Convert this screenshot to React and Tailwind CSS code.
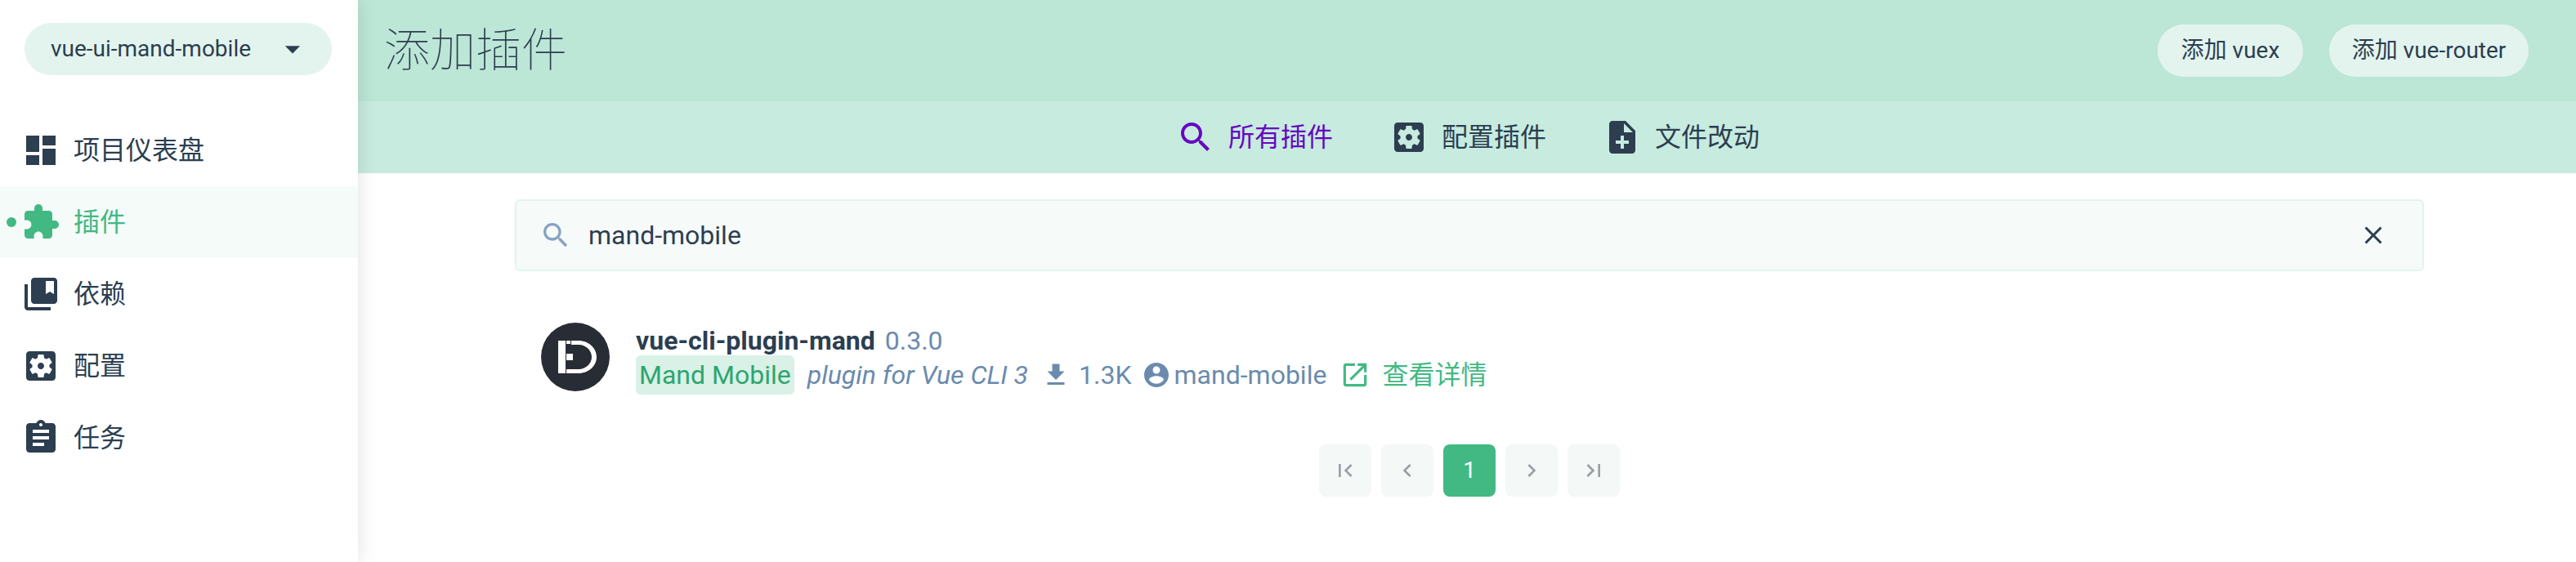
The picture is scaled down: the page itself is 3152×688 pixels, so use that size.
import React from "react";

const Icon = ({ d, className }) => (
  <svg viewBox="0 0 24 24" fill="currentColor" className={className}>
    <path d={d} />
  </svg>
);

const paths = {
  dashboard: "M3 13h8V3H3v10zm0 8h8v-6H3v6zm10 0h8V11h-8v10zm0-18v6h8V3h-8z",
  extension:
    "M20.5 11H19V7c0-1.1-.9-2-2-2h-4V3.5C13 2.12 11.88 1 10.5 1S8 2.12 8 3.5V5H4c-1.1 0-1.99.9-1.99 2v3.8H3.5c1.49 0 2.7 1.21 2.7 2.7s-1.21 2.7-2.7 2.7H2V20c0 1.1.9 2 2 2h3.8v-1.5c0-1.49 1.21-2.7 2.7-2.7 1.49 0 2.7 1.21 2.7 2.7V22H17c1.1 0 2-.9 2-2v-4h1.5c1.38 0 2.5-1.12 2.5-2.5S21.88 11 20.5 11z",
  collections:
    "M4 6H2v14c0 1.1.9 2 2 2h14v-2H4V6zm16-4H8c-1.1 0-2 .9-2 2v12c0 1.1.9 2 2 2h12c1.1 0 2-.9 2-2V4c0-1.1-.9-2-2-2zm0 10l-2.5-1.5L15 12V4h5v8z",
  settings:
    "M12 10c-1.1 0-2 .9-2 2s.9 2 2 2 2-.9 2-2-.9-2-2-2zm7-7H5c-1.11 0-2 .9-2 2v14c0 1.1.89 2 2 2h14c1.11 0 2-.9 2-2V5c0-1.1-.89-2-2-2zm-1.75 9c0 .23-.02.46-.05.68l1.48 1.16c.13.11.17.3.08.45l-1.4 2.42c-.09.15-.27.21-.43.15l-1.74-.7c-.36.28-.76.51-1.18.69l-.26 1.85c-.03.17-.18.3-.35.3h-2.8c-.17 0-.32-.13-.35-.29l-.26-1.85c-.43-.18-.82-.41-1.18-.69l-1.74.7c-.16.06-.34 0-.43-.15l-1.4-2.42c-.09-.15-.05-.34.08-.45l1.48-1.16c-.03-.23-.05-.46-.05-.69 0-.23.02-.46.05-.68l-1.48-1.16c-.13-.11-.17-.3-.08-.45l1.4-2.42c.09-.15.27-.21.43-.15l1.74.7c.36-.28.76-.51 1.18-.69l.26-1.85c.03-.17.18-.3.35-.3h2.8c.17 0 .32.13.35.29l.26 1.85c.43.18.82.41 1.18.69l1.74-.7c.16-.06.34 0 .43.15l1.4 2.42c.09.15.05.34-.08.45l-1.48 1.16c.03.23.05.46.05.69z",
  assignment:
    "M19 3h-4.18C14.4 1.84 13.3 1 12 1c-1.3 0-2.4.84-2.82 2H5c-1.1 0-2 .9-2 2v14c0 1.1.9 2 2 2h14c1.1 0 2-.9 2-2V5c0-1.1-.9-2-2-2zm-7 0c.55 0 1 .45 1 1s-.45 1-1 1-1-.45-1-1 .45-1 1-1zm2 14H7v-2h7v2zm3-4H7v-2h10v2zm0-4H7V7h10v2z",
  search:
    "M15.5 14h-.79l-.28-.27C15.41 12.59 16 11.11 16 9.5 16 5.91 13.09 3 9.5 3S3 5.91 3 9.5 5.91 16 9.5 16c1.61 0 3.09-.59 4.23-1.57l.27.28v.79l5 4.99L20.49 19l-4.99-5zm-6 0C7.01 14 5 11.99 5 9.5S7.01 5 9.5 5 14 7.01 14 9.5 11.99 14 9.5 14z",
  noteAdd:
    "M14 2H6c-1.1 0-1.99.9-1.99 2L4 20c0 1.1.89 2 1.99 2H18c1.1 0 2-.9 2-2V8l-6-6zm2 14h-3v3h-2v-3H8v-2h3v-3h2v3h3v2zm-3-7V3.5L18.5 9H13z",
  close:
    "M19 6.41L17.59 5 12 10.59 6.41 5 5 6.41 10.59 12 5 17.59 6.41 19 12 13.41 17.59 19 19 17.59 13.41 12z",
  dropDown: "M7 10l5 5 5-5z",
  download: "M19 9h-4V3H9v6H5l7 7 7-7zM5 18v2h14v-2H5z",
  account:
    "M12 2C6.48 2 2 6.48 2 12s4.48 10 10 10 10-4.48 10-10S17.52 2 12 2zm0 3c1.66 0 3 1.34 3 3s-1.34 3-3 3-3-1.34-3-3 1.34-3 3-3zm0 14.2c-2.5 0-4.71-1.28-6-3.22.03-1.99 4-3.08 6-3.08 1.99 0 5.97 1.09 6 3.08-1.29 1.94-3.5 3.22-6 3.22z",
  openNew:
    "M19 19H5V5h7V3H5c-1.11 0-2 .9-2 2v14c0 1.1.89 2 2 2h14c1.1 0 2-.9 2-2v-7h-2v7zM14 3v2h3.59l-9.83 9.83 1.41 1.41L19 6.41V10h2V3h-7z",
  first: "M18.41 16.59L13.82 12l4.59-4.59L17 6l-6 6 6 6zM6 6h2v12H6z",
  prev: "M15.41 7.41L14 6l-6 6 6 6 1.41-1.41L10.83 12z",
  next: "M10 6L8.59 7.41 13.17 12l-4.58 4.59L10 18l6-6z",
  last: "M5.59 7.41L10.18 12l-4.59 4.59L7 18l6-6-6-6zM16 6h2v12h-2z",
};

const navItems = [
  { label: "项目仪表盘", icon: paths.dashboard },
  { label: "插件", icon: paths.extension, active: true },
  { label: "依赖", icon: paths.collections },
  { label: "配置", icon: paths.settings },
  { label: "任务", icon: paths.assignment },
];

const tabs = [
  { label: "所有插件", icon: paths.search, active: true },
  { label: "配置插件", icon: paths.settings },
  { label: "文件改动", icon: paths.noteAdd },
];

const Sidebar = () => (
  <aside className="relative z-10 w-[438px] shrink-0 bg-white shadow-[0_0_24px_rgba(0,0,0,0.12)]">
    <div className="pl-[30px] pr-[32px] pt-[28px]">
      <div className="flex h-[64px] items-center justify-between rounded-full bg-[#e3f4ee] pl-[32px] pr-[26px] text-[28px]">
        <span>vue-ui-mand-mobile</span>
        <Icon d={paths.dropDown} className="h-[44px] w-[44px] shrink-0" />
      </div>
    </div>
    <nav className="mt-[48px]">
      {navItems.map((item) => (
        <div
          key={item.label}
          className={`relative flex h-[88px] items-center pl-[26px] ${
            item.active ? "bg-[#f5fbf9] text-[#42b983]" : ""
          }`}
        >
          {item.active && (
            <span className="absolute left-[8px] top-[38px] h-[12px] w-[12px] rounded-full bg-[#42b983]" />
          )}
          <Icon d={item.icon} className="h-[48px] w-[48px] shrink-0" />
          <span className="ml-[16px] text-[32px]">{item.label}</span>
        </div>
      ))}
    </nav>
  </aside>
);

const Logo = () => (
  <svg viewBox="0 0 84 84" className="h-[84px] w-[84px] shrink-0">
    <circle cx="42" cy="42" r="42" fill="#282c34" />
    <path
      fill="#fff"
      d="M21 22h9v40h-9zM31 22h5v4h-5zM31 38h8v8h-8zM37 22h9c12 0 22 9 22 20s-10 20-22 20H31v-5h15c9 0 16-7 16-15s-7-15-16-15h-9z"
    />
  </svg>
);

const PageButton = ({ d, label, active }) => (
  <div
    className={`flex h-[64px] w-[64px] items-center justify-center rounded-[8px] ${
      active ? "bg-[#42b983] text-white" : "bg-[#f4f8f7] text-[#9a9fa6]"
    }`}
  >
    {label ? (
      <span className="text-[28px]">{label}</span>
    ) : (
      <Icon d={d} className="h-[32px] w-[32px]" />
    )}
  </div>
);

export default function App() {
  return (
    <div className="flex h-[688px] w-[3152px] overflow-hidden bg-white font-['Roboto','Noto_Sans_CJK_SC',sans-serif] text-[#2c3e50]">
      <Sidebar />
      <main className="min-w-0 flex-1">
        <header className="flex h-[124px] items-center justify-between bg-[#bce6d6] pl-[32px] pr-[58px]">
          <h1 className="text-[56px] font-thin leading-none">添加插件</h1>
          <div className="flex gap-[32px]">
            <button className="h-[64px] w-[178px] rounded-full bg-[#e3f4ee] text-[28px]">添加 vuex</button>
            <button className="h-[64px] w-[244px] rounded-full bg-[#e3f4ee] text-[28px]">添加 vue-router</button>
          </div>
        </header>

        <div className="flex h-[88px] items-center justify-center gap-[69px] bg-[#c7ebdf] pl-[2px]">
          {tabs.map((tab) => (
            <div
              key={tab.label}
              className={`flex items-center gap-[16px] text-[32px] ${tab.active ? "text-[#6806c1]" : ""}`}
            >
              <Icon d={tab.icon} className="h-[48px] w-[48px] shrink-0" />
              <span>{tab.label}</span>
            </div>
          ))}
        </div>

        <div className="ml-[192px] mr-[186px] mt-[32px]">
          <div className="flex h-[88px] items-center rounded-[6px] border-2 border-[#e3f4ee] bg-[#f6faf9] pl-[28px] pr-[42px]">
            <Icon d={paths.search} className="h-[40px] w-[40px] shrink-0 text-[#86a3c2]" />
            <span className="ml-[20px] flex-1 text-[32px]">mand-mobile</span>
            <Icon d={paths.close} className="h-[36px] w-[36px] shrink-0" />
          </div>

          <div className="mt-[63px] flex items-start pl-[32px]">
            <Logo />
            <div className="ml-[32px] pt-[3px]">
              <div className="flex items-center text-[32px] leading-[38px]">
                <span className="font-bold">vue-cli-plugin-mand</span>
                <span className="ml-[12px] text-[#6a8bad]">0.3.0</span>
              </div>
              <div className="mt-[4px] flex h-[38px] items-center text-[32px] text-[#6a8bad]">
                <span className="rounded-[6px] bg-[#d9f1e6] px-[4px] text-[#2fa56f]">Mand Mobile</span>
                <span className="ml-[16px] italic">plugin for Vue CLI 3</span>
                <Icon d={paths.download} className="ml-[16px] h-[36px] w-[36px] shrink-0" />
                <span className="ml-[10px]">1.3K</span>
                <Icon d={paths.account} className="ml-[12px] h-[36px] w-[36px] shrink-0" />
                <span className="ml-[4px]">mand-mobile</span>
                <Icon d={paths.openNew} className="ml-[16px] h-[38px] w-[38px] shrink-0 text-[#42b983]" />
                <span className="ml-[14px] text-[#42b983]">查看详情</span>
              </div>
            </div>
          </div>

          <div className="mt-[65px] flex justify-center gap-[12px]">
            <PageButton d={paths.first} />
            <PageButton d={paths.prev} />
            <PageButton label="1" active />
            <PageButton d={paths.next} />
            <PageButton d={paths.last} />
          </div>
        </div>
      </main>
    </div>
  );
}
